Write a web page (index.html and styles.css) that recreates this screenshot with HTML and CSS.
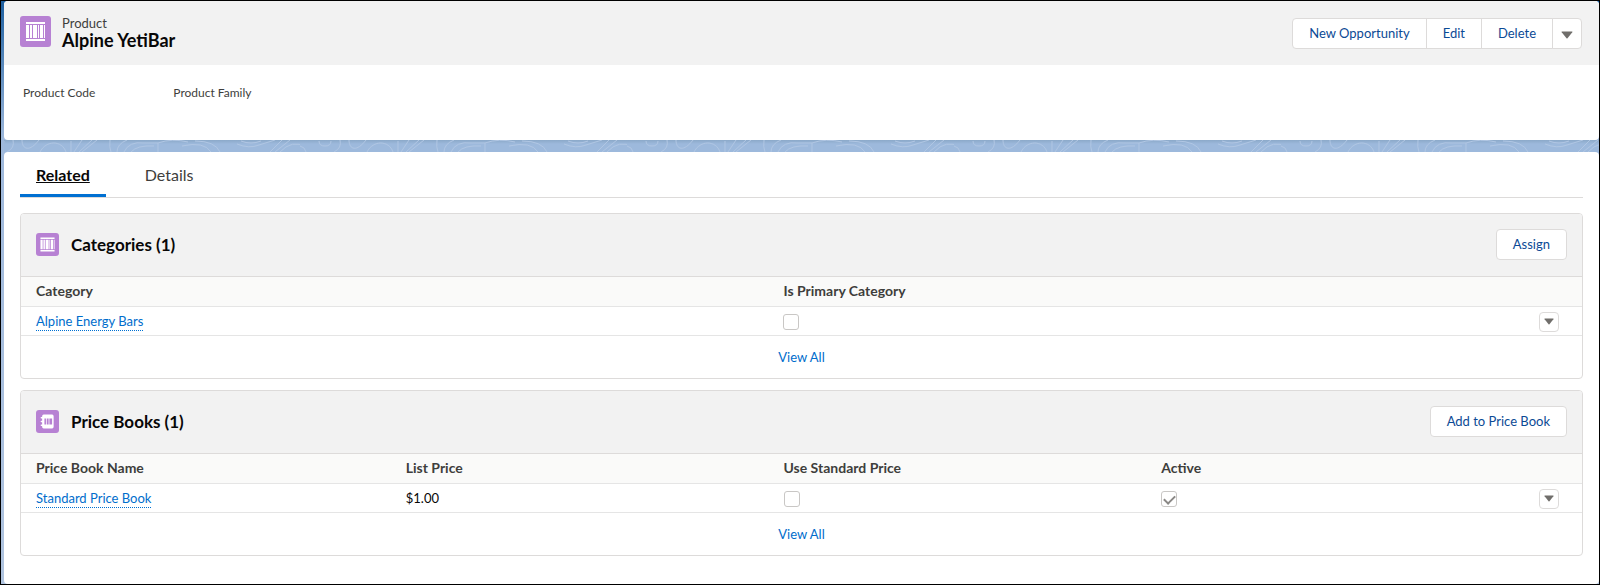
FILE: index.html
```html
<!DOCTYPE html>
<html lang="en">
<head>
  <meta charset="UTF-8">
  <title>Alpine YetiBar | Product</title>
  <link rel="stylesheet" href="styles.css">
</head>
<body>

<!-- shared icons -->
<svg class="sprite" aria-hidden="true">
  <symbol id="icon-product" viewBox="0 0 31 31">
    <path fill="#fff" d="M6 6h19v2H6zM6 23h19v2H6zM6 9h3v13H6zM10 9h2v13h-2zM13 9h4v13h-4zM18 9h1v13h-1zM20 9h3v13h-3zM24 9h1v13h-1z"/>
  </symbol>
  <symbol id="icon-pricebook" viewBox="0 0 30 30">
    <path fill="#fff" d="M10 6h11a2 2 0 0 1 2 2v14a2 2 0 0 1-2 2H10a2 2 0 0 1-2-2v-1H7a1 1 0 0 1 0-2h1v-3H7a1 1 0 0 1 0-2h1v-3H7a1 1 0 0 1 0-2h1V8a2 2 0 0 1 2-2z"/>
    <path fill="#b781d3" d="M11 11h2v8h-2zM14 11h2v8h-2zM16.500 11h1v8h-1zM18 11h3v8h-3z"/>
  </symbol>
  <symbol id="icon-down" viewBox="0 0 12 8">
    <path fill="#706e6b" d="M1 0.5h10q.8 0 .3.7L6.500 7.200q-.5.5-1 0L.7 1.200Q.2.5 1 .5z"/>
  </symbol>
</svg>

<div class="page">
  <header class="card highlights">
    <div class="highlights-top">
      <svg class="icon icon-large" aria-hidden="true"><use href="#icon-product"/></svg>
      <div class="record">
        <div class="record-type">Product</div>
        <h1 class="record-name">Alpine YetiBar</h1>
      </div>
      <div class="button-group">
        <button type="button" class="button">New Opportunity</button>
        <button type="button" class="button">Edit</button>
        <button type="button" class="button">Delete</button>
        <button type="button" class="button button-more" aria-label="More actions"><svg class="arrow"><use href="#icon-down"/></svg></button>
      </div>
    </div>
    <div class="fields">
      <div class="field">Product Code</div>
      <div class="field">Product Family</div>
    </div>
  </header>

  <svg class="contours" aria-hidden="true">
    <defs>
      <pattern id="contour-lines" width="327" height="12" patternUnits="userSpaceOnUse" patternTransform="translate(-31)">
        <g fill="none" stroke="#b0c6e3">
          <path d="M0 6q5 1 6 6M19 1q0 5 6 5t6-5M40 0q2 8-6 12M49 0c0 10 8 12 17 0M67 12c6-12 22-12 26 0M98 1v11M101 12L109 0M106 12L119 0M109 12L124 0M137 0q-1 7 1 12M144 12q0-8 10-12M151 12q5-11 20-9h14M158 12q6-7 23-6M185 12V3q14-5 30-1M209 6q22-5 29 6M222 1q20 0 25 11M264 4q12 5 22 1l16-5M268 1q10 4 20 0M297 12L309 0M302 12L317 0M307 12q12-13 26-5"/>
        </g>
      </pattern>
    </defs>
    <rect width="100%" height="100%" fill="url(#contour-lines)"/>
  </svg>

  <main class="card content">
    <nav class="tabs">
      <a class="tab tab-active" href="#related">Related</a>
      <a class="tab" href="#details">Details</a>
    </nav>

    <section class="panel" id="related">
      <div class="panel-header">
        <svg class="icon" aria-hidden="true"><use href="#icon-product"/></svg>
        <h2 class="panel-title">Categories (1)</h2>
        <button type="button" class="button">Assign</button>
      </div>
      <table class="list">
        <thead>
          <tr>
            <th>Category</th>
            <th class="col-half">Is Primary Category</th>
            <th class="col-action"></th>
          </tr>
        </thead>
        <tbody>
          <tr>
            <td><a class="record-link" href="#category">Alpine Energy Bars</a></td>
            <td><input type="checkbox" class="checkbox" aria-label="Is Primary Category"></td>
            <td><button type="button" class="row-menu" aria-label="Row actions"><svg class="arrow"><use href="#icon-down"/></svg></button></td>
          </tr>
        </tbody>
      </table>
      <div class="panel-footer"><a href="#categories">View All</a></div>
    </section>

    <section class="panel">
      <div class="panel-header">
        <svg class="icon" aria-hidden="true"><use href="#icon-pricebook"/></svg>
        <h2 class="panel-title">Price Books (1)</h2>
        <button type="button" class="button">Add to Price Book</button>
      </div>
      <table class="list">
        <thead>
          <tr>
            <th>Price Book Name</th>
            <th class="col-quarter">List Price</th>
            <th class="col-quarter">Use Standard Price</th>
            <th class="col-quarter">Active</th>
            <th class="col-action"></th>
          </tr>
        </thead>
        <tbody>
          <tr>
            <td><a class="record-link" href="#pricebook">Standard Price Book</a></td>
            <td>$1.00</td>
            <td><input type="checkbox" class="checkbox" aria-label="Use Standard Price"></td>
            <td><input type="checkbox" class="checkbox" aria-label="Active" checked></td>
            <td><button type="button" class="row-menu" aria-label="Row actions"><svg class="arrow"><use href="#icon-down"/></svg></button></td>
          </tr>
        </tbody>
      </table>
      <div class="panel-footer"><a href="#pricebooks">View All</a></div>
    </section>
  </main>
</div>

</body>
</html>
```
FILE: styles.css
```css
* {
  box-sizing: border-box;
}

body {
  margin: 0;
  font-family: Lato, "Open Sans", sans-serif;
  font-size: 13px;
  line-height: 20px;
  color: #080707;
}

a {
  color: #006dcc;
  text-decoration: none;
}

.sprite {
  display: none;
}

.page {
  display: flex;
  flex-direction: column;
  min-height: 100vh;
  padding-left: 3px;
  border: 1px solid #000;
  background: linear-gradient(#1d5fa0, #9fb9dc 140px, #b0c4df);
}

.card {
  background: #fff;
  border-radius: 4px;
}

.highlights {
  overflow: hidden;
}

.highlights-top {
  display: flex;
  align-items: flex-start;
  padding: 15px 17px 15px 16px;
  background: #f2f2f2;
}

.icon {
  flex: none;
  width: 23px;
  height: 23px;
  border-radius: 3px;
  background: #b781d3;
}

.icon-large {
  width: 31px;
  height: 31px;
}

.record {
  flex: 1;
  margin-left: 11px;
}

.record-type {
  line-height: 14px;
  color: #3e3e3c;
}

.record-name {
  margin: 0;
  font-size: 18px;
  line-height: 20px;
  font-weight: 700;
}

.button {
  height: 31px;
  padding: 0 16px 1px;
  border: 1px solid #dddbda;
  border-radius: 4px;
  background: #fff;
  font: inherit;
  color: #0b4a95;
}

.button-group {
  display: flex;
  margin-top: 2px;
}

.button-group .button {
  margin-left: -1px;
  border-radius: 0;
}

.button-group .button:first-child {
  border-radius: 4px 0 0 4px;
}

.button-group .button:last-child {
  border-radius: 0 4px 4px 0;
}

.button-group .button-more {
  padding: 2px 8px 0;
}

.arrow {
  display: block;
  width: 12px;
  height: 8px;
}

.fields {
  display: flex;
  gap: 78px;
  padding: 18px 19px 37px;
  font-size: 12px;
  color: #3e3e3c;
}

.contours {
  display: block;
  width: 100%;
  height: 12px;
  background: linear-gradient(#8ba9c9, #9db9dc 4px);
}

.content {
  flex: 1;
  padding: 0 16px 27px;
}

.tabs {
  display: flex;
  gap: 23px;
  height: 46px;
  margin-bottom: 15px;
  border-bottom: 1px solid #dddbda;
}

.tab {
  padding: 0 16px;
  border-bottom: 3px solid transparent;
  font-size: 16px;
  line-height: 46px;
  color: #3e3e3c;
}

.tab-active {
  border-bottom-color: #0070d2;
  font-weight: 700;
  color: #080707;
  text-decoration: underline;
}

.panel {
  overflow: hidden;
  border: 1px solid #dddbda;
  border-radius: 4px;
}

.panel + .panel {
  margin-top: 11px;
}

.panel-header {
  display: flex;
  align-items: center;
  height: 62px;
  padding: 0 15px 1px;
  background: #f2f2f2;
}

.panel-title {
  flex: 1;
  margin: 0 0 0 12px;
  font-size: 17px;
  font-weight: 700;
}

.list {
  width: 100%;
  table-layout: fixed;
  border-collapse: collapse;
}

.list th,
.list td {
  padding: 0 15px;
  text-align: left;
  border-bottom: 1px solid #e5e5e5;
}

.list th {
  height: 30px;
  padding-bottom: 1px;
  border-top: 1px solid #dddbda;
  background: #fafaf9;
  font-size: 14px;
  font-weight: 700;
  color: #3e3e3c;
}

.list td {
  height: 29px;
}

.col-half {
  width: 48.4%;
}

.col-quarter {
  width: 24.2%;
}

.col-action {
  width: 58px;
}

.record-link {
  display: inline-block;
  line-height: 18px;
  border-bottom: 1px dotted #0070d2;
}

.checkbox {
  display: grid;
  place-items: center;
  appearance: none;
  width: 16px;
  height: 16px;
  margin: 2px 0 0;
  border: 1px solid #c9c7c5;
  border-radius: 3px;
  background: #fff;
}

.checkbox:checked::before {
  content: "";
  width: 9px;
  height: 5px;
  border-left: 2px solid #8a8886;
  border-bottom: 2px solid #8a8886;
  transform: translateY(-1px) rotate(-45deg);
}

.row-menu {
  display: flex;
  align-items: center;
  justify-content: center;
  width: 20px;
  height: 20px;
  margin-top: 1px;
  padding: 0;
  border: 1px solid #dddbda;
  border-radius: 4px;
  background: #fff;
}

.row-menu .arrow {
  width: 10px;
  height: 7px;
}

.panel-footer {
  padding: 11px;
  text-align: center;
}
```
